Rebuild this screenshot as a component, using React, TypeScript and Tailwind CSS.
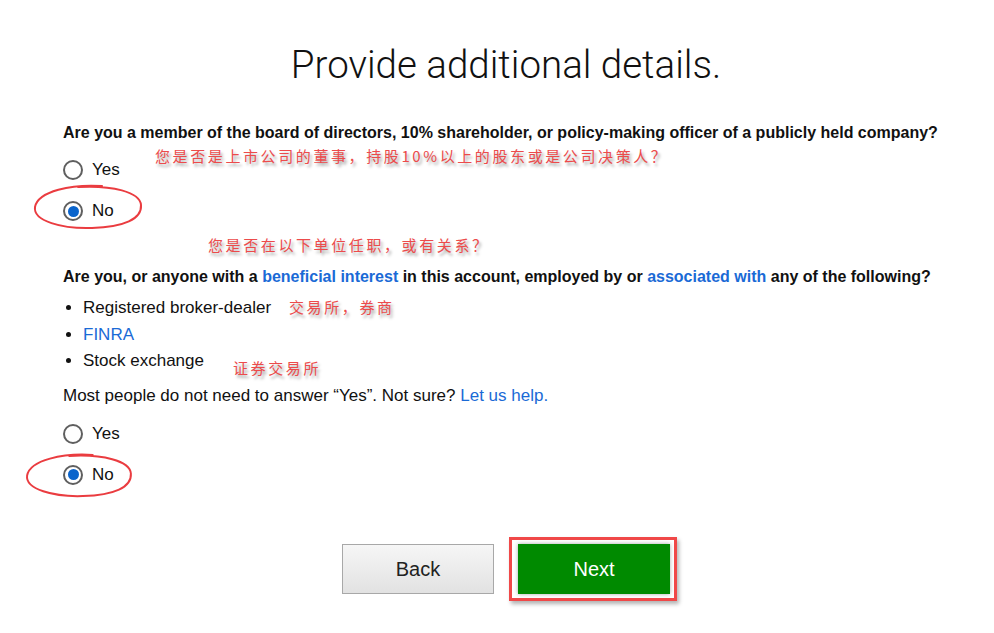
import React from "react";

const Note: React.FC<{ text: string; className: string }> = ({ text, className }) => (
  <span
    className={`absolute whitespace-nowrap text-[15px] leading-[20px] tracking-[2.6px] text-[#ec4b4b] [font-family:'Noto_Sans_CJK_SC',sans-serif] [text-shadow:2px_3px_3px_rgba(0,0,0,0.35)] ${className}`}
  >
    {text}
  </span>
);

const Ring: React.FC<{ className: string }> = ({ className }) => (
  <svg className={`absolute pointer-events-none ${className}`} viewBox="0 0 112 48" fill="none">
    <path
      d="M70 3 C40 1 6 8 3 24 C1 38 30 46 60 45 C92 44 110 36 109 22 C108 9 80 2 46 4"
      stroke="#ea3c40"
      strokeWidth="2"
      strokeLinecap="round"
    />
  </svg>
);

const Radio: React.FC<{ label: string; checked?: boolean }> = ({ label, checked }) => (
  <label className="flex items-center h-6 gap-[9px] text-[17px] text-[#111]">
    <span className="w-5 h-5 rounded-full border-2 border-[#5f5f5f] bg-white flex items-center justify-center">
      {checked && <span className="w-[11px] h-[11px] rounded-full bg-[#0a64cc]" />}
    </span>
    {label}
  </label>
);

const A: React.FC<{ children: React.ReactNode }> = ({ children }) => (
  <a className="text-[#1a6ad6] cursor-pointer">{children}</a>
);

export default function App() {
  return (
    <div className="w-full min-h-[633px] bg-white [font-family:'Liberation_Sans',Arial,sans-serif] text-[#111]">
      <div className="ml-[63px] w-[886px] relative pb-10">
        <h1 className="pt-[43px] text-center text-[38.5px] leading-[44px] font-light text-[#111] [font-family:Roboto,sans-serif]">
          Provide additional details.
        </h1>

        <section className="relative">
          <p className="mt-[34px] text-[16px] leading-6 font-semibold">
            Are you a member of the board of directors, 10% shareholder, or policy-making officer of a publicly held company?
          </p>
          <Note text="您是否是上市公司的董事，持股10%以上的股东或是公司决策人？" className="left-[92px] top-[25px]" />
          <div className="mt-[13px] flex flex-col gap-[17px]">
            <Radio label="Yes" />
            <Radio label="No" checked />
          </div>
          <Ring className="left-[-31px] top-[62px] w-[112px] h-[48px]" />
        </section>

        <section className="relative">
          <Note text="您是否在以下单位任职，或有关系？" className="left-[145px] top-[12px]" />
          <p className="pt-[42px] text-[16px] leading-6 font-semibold">
            Are you, or anyone with a <A>beneficial interest</A> in this account, employed by or{" "}
            <A>associated with</A> any of the following?
          </p>
          <ul className="mt-[6px] text-[17px] leading-[26.5px] list-disc pl-[20px]">
            <li className="relative">
              Registered broker-dealer
              <Note text="交易所，券商" className="left-[206px] top-[2px]" />
            </li>
            <li>
              <A>FINRA</A>
            </li>
            <li className="relative">
              Stock exchange
              <Note text="证券交易所" className="left-[150px] top-[10px]" />
            </li>
          </ul>
          <p className="mt-[9px] text-[17px] leading-6">
            Most people do not need to answer “Yes”. Not sure? <A>Let us help.</A>
          </p>
          <div className="mt-[14px] flex flex-col gap-[17px]">
            <Radio label="Yes" />
            <Radio label="No" checked />
          </div>
          <Ring className="left-[-40px] top-[229px] w-[112px] h-[47px]" />
        </section>

        <div className="mt-[57px] flex justify-center gap-6">
          <button className="w-[152px] h-[50px] border border-[#a8a8a8] bg-gradient-to-b from-[#f6f6f6] to-[#e2e2e2] text-[20px] text-[#222]">
            Back
          </button>
          <div className="relative">
            <button className="w-[152px] h-[50px] bg-[#008a00] text-[20px] text-white shadow-[0_0_4px_rgba(0,0,0,0.35)]">
              Next
            </button>
            <span className="absolute left-[-9px] top-[-7px] w-[168px] h-[64px] border-[3px] border-[#f04848] shadow-[2px_3px_4px_rgba(0,0,0,0.3)] pointer-events-none" />
          </div>
        </div>
      </div>
    </div>
  );
}
